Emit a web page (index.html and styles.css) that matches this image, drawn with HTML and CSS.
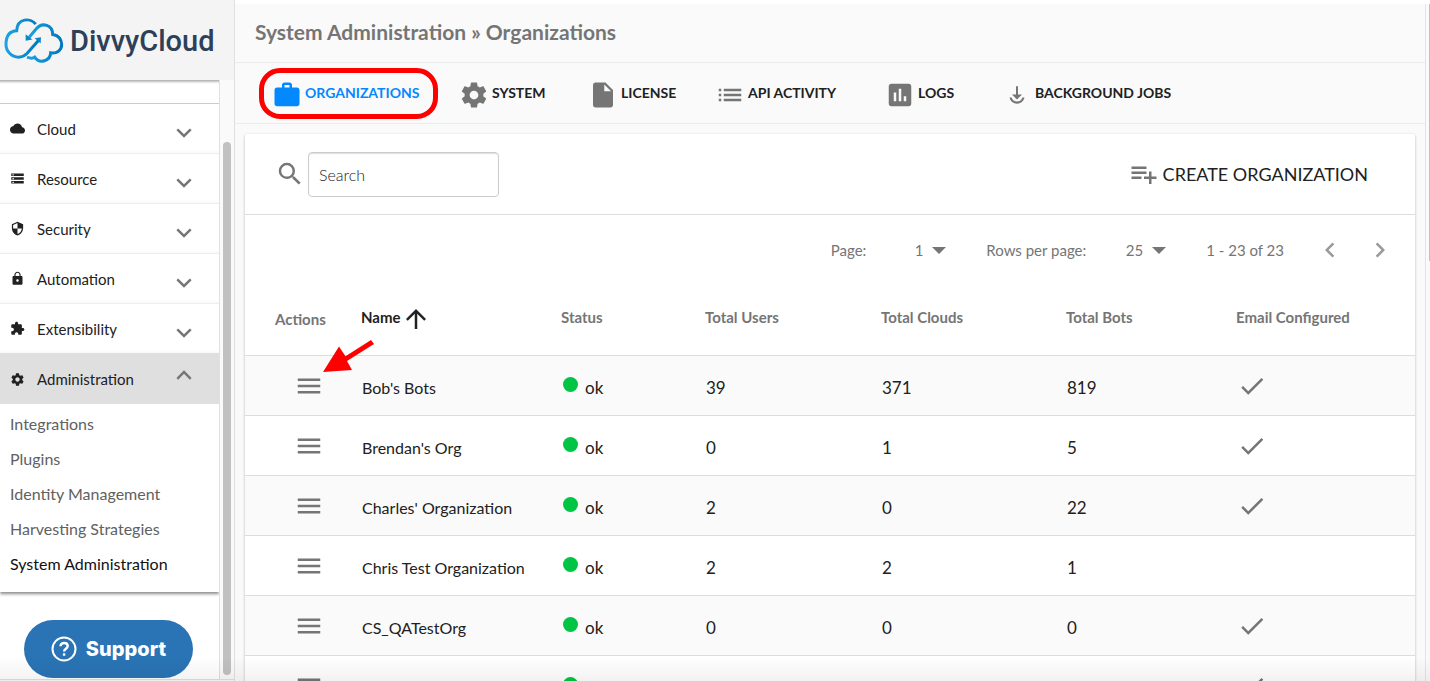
FILE: index.html
```html
<!DOCTYPE html>
<html lang="en">
<head>
<meta charset="utf-8">
<title>System Administration » Organizations</title>
<link rel="stylesheet" href="styles.css">
</head>
<body>
<svg class="defs" aria-hidden="true">
  <symbol id="i-down" viewBox="0 0 24 24"><path d="M7 7.200 12 12.200l5-5L18.500 8.700 12 15.200 5.500 8.700z"/></symbol>
  <symbol id="i-up" viewBox="0 0 24 24"><path d="M7 16 12 11l5 5L18.500 14.500 12 8l-6.500 6.500z"/></symbol>
  <symbol id="i-menu" viewBox="0 0 24 24"><path d="M3 18h18v-2H3v2zm0-5h18v-2H3v2zm0-7v2h18V6H3z"/></symbol>
  <symbol id="i-check" viewBox="0 0 24 24"><path d="M9 16.17 4.83 12l-1.42 1.41L9 19 21 7l-1.41-1.41z"/></symbol>
  <symbol id="i-gear" viewBox="0 0 24 24"><path d="M19.43 12.98c.04-.32.07-.64.07-.98s-.03-.66-.07-.98l2.11-1.65c.19-.15.24-.42.12-.64l-2-3.46c-.12-.22-.39-.3-.61-.22l-2.49 1c-.52-.4-1.08-.73-1.69-.98l-.38-2.65C14.46 2.18 14.25 2 14 2h-4c-.25 0-.46.18-.49.42l-.38 2.65c-.61.25-1.17.59-1.69.98l-2.49-1c-.23-.09-.49 0-.61.22l-2 3.46c-.13.22-.07.49.12.64l2.11 1.65c-.04.32-.07.65-.07.98s.03.66.07.98l-2.11 1.65c-.19.15-.24.42-.12.64l2 3.46c.12.22.39.3.61.22l2.49-1c.52.4 1.08.73 1.69.98l.38 2.65c.03.24.24.42.49.42h4c.25 0 .46-.18.49-.42l.38-2.65c.61-.25 1.17-.59 1.69-.98l2.49 1c.23.09.49 0 .61-.22l2-3.46c.12-.22.07-.49-.12-.64l-2.11-1.65zM12 15.5c-1.93 0-3.5-1.57-3.5-3.5s1.57-3.500 3.5-3.500 3.500 1.570 3.500 3.500-1.570 3.500-3.500 3.500z"/></symbol>
  <symbol id="i-caret" viewBox="0 0 14 8"><path d="M0 0h14L7 7z"/></symbol>
</svg>

<div class="app">
  <aside class="sidebar">
    <a class="brand" href="#">
      <svg class="brand-mark" viewBox="12 50 180 140" aria-hidden="true">
        <defs><linearGradient id="sky" x1="0" x2="1"><stop offset="0" stop-color="#1ba3e3"/><stop offset="1" stop-color="#0077bd"/></linearGradient></defs>
        <g fill="none" stroke="url(#sky)" stroke-width="9">
          <path d="M107 71C92 51 51 52 50 91C26 92 18 111 18 132C18 152 34 170 56 170C68 170 74 166 81 159L116 119"/>
          <path d="M85 113L107 87C127 62 158 74 158 102C176 104 185 118 185 132C185 149 170 161 152 157C151 180 119 193 104 170C98 175 89 173 81 170"/>
        </g>
        <path fill="#0a86cb" d="M123 110L122 129L104 113zM77 121L77 101L97 117z"/>
      </svg>
      <span class="brand-name">DivvyCloud</span>
    </a>
    <div class="side-body">
      <div class="side-col">
        <nav class="menu">
          <button class="menu-item"><svg class="mi" viewBox="0 0 24 24"><path d="M19.35 10.04C18.67 6.59 15.64 4 12 4 9.11 4 6.600 5.640 5.350 8.040 2.340 8.360 0 10.910 0 14c0 3.310 2.690 6 6 6h13c2.760 0 5-2.240 5-5 0-2.640-2.050-4.780-4.650-4.960z"/></svg><span>Cloud</span><svg class="chev"><use href="#i-down"/></svg></button>
          <button class="menu-item"><svg class="mi" viewBox="0 0 24 24"><path d="M2 20h20v-4H2v4zm2-3h2v2H4v-2zM2 4v4h20V4H2zm4 3H4V5h2v2zm-4 7h20v-4H2v4zm2-3h2v2H4v-2z"/></svg><span>Resource</span><svg class="chev"><use href="#i-down"/></svg></button>
          <button class="menu-item"><svg class="mi" viewBox="0 0 24 24"><path d="M12 1 3 5v6c0 5.55 3.84 10.740 9 12 5.160-1.260 9-6.450 9-12V5l-9-4zm0 10.990h7c-.53 4.120-3.280 7.790-7 8.940V12H5V6.300l7-3.110v8.800z"/></svg><span>Security</span><svg class="chev"><use href="#i-down"/></svg></button>
          <button class="menu-item"><svg class="mi" viewBox="0 0 24 24"><path d="M18 8h-1V6c0-2.760-2.240-5-5-5S7 3.240 7 6v2H6c-1.100 0-2 .9-2 2v10c0 1.100.9 2 2 2h12c1.100 0 2-.9 2-2V10c0-1.100-.9-2-2-2zm-6 9c-1.100 0-2-.9-2-2s.9-2 2-2 2 .9 2 2-.9 2-2 2zm3.100-9H8.900V6c0-1.710 1.390-3.100 3.100-3.100s3.100 1.390 3.100 3.100v2z"/></svg><span>Automation</span><svg class="chev"><use href="#i-down"/></svg></button>
          <button class="menu-item"><svg class="mi" viewBox="0 0 24 24"><path d="M20.500 11H19V7c0-1.100-.9-2-2-2h-4V3.500C13 2.120 11.880 1 10.500 1S8 2.120 8 3.500V5H4c-1.100 0-1.990.9-1.990 2v3.800H3.500c1.490 0 2.700 1.210 2.700 2.700s-1.210 2.700-2.700 2.700H2V20c0 1.100.9 2 2 2h3.800v-1.500c0-1.490 1.210-2.700 2.700-2.700 1.490 0 2.700 1.210 2.700 2.700V22H17c1.100 0 2-.9 2-2v-4h1.500c1.380 0 2.500-1.120 2.500-2.500S21.880 11 20.500 11z"/></svg><span>Extensibility</span><svg class="chev"><use href="#i-down"/></svg></button>
          <button class="menu-item open" aria-expanded="true"><svg class="mi"><use href="#i-gear"/></svg><span>Administration</span><svg class="chev"><use href="#i-up"/></svg></button>
          <ul class="submenu">
            <li><a href="#">Integrations</a></li>
            <li><a href="#">Plugins</a></li>
            <li><a href="#">Identity Management</a></li>
            <li><a href="#">Harvesting Strategies</a></li>
            <li><a href="#" class="current">System Administration</a></li>
          </ul>
        </nav>
        <button class="support">
          <svg viewBox="0 0 26 26" fill="none" stroke="#fff" stroke-width="2" aria-hidden="true"><circle cx="13" cy="13" r="11.500"/><path stroke-width="2.400" d="M9.500 10.300c0-4.600 7.200-4.300 7.200-.2 0 2.700-3.600 2.700-3.600 5.300M13.100 17.200v2.500"/></svg>
          <span>Support</span>
        </button>
      </div>
      <div class="side-scroll"><div class="side-thumb"></div></div>
    </div>
  </aside>

  <div class="page">
    <main class="main">
      <h1 class="title">System Administration » Organizations</h1>
      <nav class="tabs">
        <a class="tab active" href="#"><svg viewBox="0 0 24 24"><path d="M20 6h-4V4c0-1.110-.89-2-2-2h-4c-1.110 0-2 .89-2 2v2H4c-1.110 0-1.990.89-1.990 2L2 19c0 1.110.89 2 2 2h16c1.110 0 2-.89 2-2V8c0-1.110-.89-2-2-2zm-6 0h-4V4h4v2z"/></svg><span>ORGANIZATIONS</span><i class="ring"></i></a>
        <a class="tab" href="#"><svg><use href="#i-gear"/></svg><span>SYSTEM</span></a>
        <a class="tab" href="#"><svg viewBox="0 0 24 24"><path d="M6 2c-1.100 0-1.990.9-1.990 2L4 20c0 1.100.89 2 1.990 2H18c1.100 0 2-.9 2-2V8l-6-6H6zm7 7V3.500L18.500 9H13z"/></svg><span>LICENSE</span></a>
        <a class="tab" href="#"><svg viewBox="0 0 24 24"><path d="M3 7h2v2H3zM3 11h2v2H3zM3 15h2v2H3zM7 7h14v2H7zM7 11h14v2H7zM7 15h14v2H7z"/></svg><span>API ACTIVITY</span></a>
        <a class="tab" href="#"><svg viewBox="0 0 24 24"><path d="M19 3H5c-1.100 0-2 .9-2 2v14c0 1.100.9 2 2 2h14c1.100 0 2-.9 2-2V5c0-1.100-.9-2-2-2zM9 17H7v-7h2v7zm4 0h-2V7h2v10zm4 0h-2v-4h2v4z"/></svg><span>LOGS</span></a>
        <a class="tab" href="#"><svg viewBox="0 0 24 24"><path d="M11.200 5h1.600v6.500H16l-4 4-4-4h3.200zM6 14h1.700a4.500 4.500 0 0 0 8.600 0H18a6.100 6.100 0 0 1-12 0z"/></svg><span>BACKGROUND JOBS</span></a>
      </nav>

      <section class="card">
        <div class="toolbar">
          <label class="search"><svg viewBox="0 0 24 24" role="img" aria-label="Search organizations"><path d="M15.500 14h-.79l-.28-.27A6.471 6.471 0 0 0 16 9.500 6.500 6.500 0 1 0 9.500 16c1.610 0 3.090-.59 4.230-1.570l.27.28v.79l5 4.990L20.490 19l-4.990-5zm-6 0C7.010 14 5 11.990 5 9.500S7.010 5 9.500 5 14 7.010 14 9.500 11.990 14 9.500 14z"/></svg>
            <input type="text" placeholder="Search"></label>
          <button class="create"><svg viewBox="0 0 24 24"><path d="M14 10H2v2h12v-2zm0-4H2v2h12V6zm4 8v-4h-2v4h-4v2h4v4h2v-4h4v-2h-4zM2 16h8v-2H2v2z"/></svg><span>CREATE ORGANIZATION</span></button>
        </div>
        <div class="pager">
          <label for="page">Page:</label>
          <span class="pick"><select id="page"><option>1</option></select><svg><use href="#i-caret"/></svg></span>
          <label for="rows">Rows per page:</label>
          <span class="pick"><select id="rows"><option>25</option></select><svg><use href="#i-caret"/></svg></span>
          <span class="range">1 - 23 of 23</span>
          <button class="step" aria-label="Previous page"><svg viewBox="0 0 24 24"><path d="M15.410 7.410 14 6l-6 6 6 6 1.410-1.410L10.830 12z"/></svg></button>
          <button class="step" aria-label="Next page"><svg viewBox="0 0 24 24"><path d="M10 6 8.590 7.410 13.170 12l-4.580 4.590L10 18l6-6z"/></svg></button>
        </div>
        <table class="orgs">
          <colgroup><col class="c-act"><col class="c-name"><col class="c-status"><col class="c-users"><col class="c-clouds"><col class="c-bots"><col class="c-mail"></colgroup>
          <thead>
            <tr><th class="actions">Actions<svg class="pointer" viewBox="0 0 50 32" aria-hidden="true"><path d="M48 0 22.500 16.300 16 6.500 0 32 29 30 24 21 51 4z"/></svg></th><th class="sorted"><span>Name</span><svg viewBox="0 0 24 24"><path d="M4 12l1.410 1.410L11 7.830V20h2V7.830l5.580 5.590L20 12l-8-8-8 8z"/></svg></th><th>Status</th><th>Total Users</th><th>Total Clouds</th><th>Total Bots</th><th>Email Configured</th></tr>
          </thead>
          <tbody>
            <tr><td><button aria-label="Actions"><svg><use href="#i-menu"/></svg></button></td><td class="name">Bob's Bots</td><td><i class="dot"></i>ok</td><td>39</td><td>371</td><td>819</td><td class="mail"><svg><use href="#i-check"/></svg></td></tr>
            <tr><td><button aria-label="Actions"><svg><use href="#i-menu"/></svg></button></td><td class="name">Brendan's Org</td><td><i class="dot"></i>ok</td><td>0</td><td>1</td><td>5</td><td class="mail"><svg><use href="#i-check"/></svg></td></tr>
            <tr><td><button aria-label="Actions"><svg><use href="#i-menu"/></svg></button></td><td class="name">Charles' Organization</td><td><i class="dot"></i>ok</td><td>2</td><td>0</td><td>22</td><td class="mail"><svg><use href="#i-check"/></svg></td></tr>
            <tr><td><button aria-label="Actions"><svg><use href="#i-menu"/></svg></button></td><td class="name">Chris Test Organization</td><td><i class="dot"></i>ok</td><td>2</td><td>2</td><td>1</td><td class="mail"></td></tr>
            <tr><td><button aria-label="Actions"><svg><use href="#i-menu"/></svg></button></td><td class="name">CS_QATestOrg</td><td><i class="dot"></i>ok</td><td>0</td><td>0</td><td>0</td><td class="mail"><svg><use href="#i-check"/></svg></td></tr>
            <tr><td><button aria-label="Actions"><svg><use href="#i-menu"/></svg></button></td><td class="name"></td><td><i class="dot"></i></td><td></td><td></td><td></td><td class="mail"><svg><use href="#i-check"/></svg></td></tr>
          </tbody>
        </table>
      </section>
    </main>
    <div class="page-scroll"><div class="page-thumb"></div></div>
  </div>
</div>
<div class="fade"></div>
</body>
</html>
```
FILE: styles.css
```css
* { box-sizing: border-box; }
body { margin: 0; font-family: Lato, sans-serif; color: #212121; background: #fff; }
button { border: 0; padding: 0; background: none; font: inherit; color: inherit; cursor: pointer; }
a { color: inherit; text-decoration: none; }
svg { flex: none; fill: #757575; }
.defs { position: absolute; width: 0; height: 0; }
.app { display: flex; height: 100vh; overflow: hidden; }

/* Sidebar */
.sidebar { display: flex; flex-direction: column; flex: none; width: 235px; border-right: 1px solid #e0e0e0; background: #fafafa; }
.brand { display: flex; align-items: center; gap: 6px; flex: none; height: 80px; padding-left: 4px; background: #f4f4f4; }
.brand-mark { width: 60px; height: 47px; fill: none; }
.brand-name { padding-top: 2px; font: 500 29px/40px Roboto, sans-serif; color: #2e4057; }
.side-body { display: flex; flex: 1; min-height: 0; margin-bottom: 1px; border-bottom: 1px solid #e0e0e0; }
.side-col { width: 220px; border-right: 1px solid #e0e0e0; background: linear-gradient(#b8b8b8, #b8b8b8 1px, #e4e4e4 2px, #fff 4px); }
.menu { padding-top: 23px; box-shadow: 0 2px 3px #8a8a8a; clip-path: inset(0 0 -6px 0); }
.menu-item { display: flex; align-items: center; width: 100%; height: 50px; padding: 0 21px 0 10px; border-top: 1px solid #eee; font-size: 15px; text-align: left; background: linear-gradient(#fff, #fff 46px, #f8f8f8 49px); }
.menu-item:first-child { border-top-color: #ccc; }
.menu-item span { flex: 1; margin-left: 12px; }
.mi { width: 15px; height: 15px; fill: #212121; }
.chev { width: 28px; height: 28px; margin-top: 10px; }
.menu .open { height: 51px; border-top-color: #dfdfdf; background: #dfdfdf; }
.open .chev { margin-top: 0; margin-bottom: 8px; }
.submenu { margin: 0; padding: 2px 0 11px; list-style: none; }
.submenu a { display: block; padding-left: 10px; font-size: 16px; line-height: 35px; color: #616161; }
.submenu .current { color: #111; }
.support { display: flex; align-items: center; justify-content: center; gap: 9px; width: 169px; height: 58px; margin: 28px 0 0 24px; border-radius: 29px; background: #2a74b5; color: #fff; font: 800 20px/24px Inter, sans-serif; }
.support svg { width: 26px; height: 26px; fill: none; }
.side-scroll { flex: 1; padding: 62px 3px 4px; }
.side-thumb { width: 8px; height: 100%; border-radius: 4px; background: #c1c1c1; }

/* Page */
.page { display: flex; flex: 1; min-width: 0; border-top: 4px solid #fff; background: #fafafa; }
.main { flex: 1; min-width: 0; }
.title { margin: 0; height: 59px; padding-left: 20px; border-bottom: 1px solid #ececec; font-size: 21px; line-height: 56px; font-weight: 700; color: #757575; }
.tabs { display: grid; grid-template-columns: 187px 129px 127px 170px 117px auto; height: 61px; padding-left: 37px; border-bottom: 1px solid #ececec; }
.tab { position: relative; display: flex; align-items: center; gap: 3px; font-size: 14px; font-weight: 700; }
.tab span { padding-bottom: 2px; }
.tab svg { width: 30px; height: 30px; margin-top: 4px; }
.active { color: #0288ff; }
.active svg { fill: #0288ff; }
.ring { position: absolute; left: -13px; top: 5px; width: 179px; height: 51px; border: 5px solid #f00; border-radius: 21px; }
.card { margin: 10px 10px 0; background: #fff; border-radius: 2px; box-shadow: 0 1px 3px #0004; }
.toolbar { display: flex; align-items: center; justify-content: space-between; height: 81px; padding: 0 47px 0 30px; border-bottom: 1px solid #ddd; }
.search { display: flex; align-items: center; gap: 3px; }
.search svg, .create svg { width: 30px; height: 30px; }
.search input { width: 191px; height: 45px; padding: 0 10px; border: 1px solid #ccc; border-radius: 4px; background: #fff; font: 300 16px/20px Lato, sans-serif; box-shadow: inset 0 1px 1px #0002; }
.search input::placeholder { color: #222; }
.create { display: flex; align-items: center; gap: 4px; font-size: 18px; }
.pager { display: flex; align-items: center; justify-content: flex-end; height: 70px; padding-right: 20px; font-size: 15px; color: #757575; }
.pick { position: relative; width: 80px; margin-right: 40px; }
.pick select { appearance: none; width: 100%; padding: 0 23px 0 0; border: 0; background: none; font: inherit; color: inherit; text-align-last: right; }
.pick svg { position: absolute; right: 0; top: 6px; width: 14px; height: 8px; pointer-events: none; }
.range { margin-right: 31px; }
.step { width: 30px; height: 30px; }
.step + .step { margin-left: 20px; }
.step svg { display: block; width: 30px; height: 30px; fill: #999; }

/* Table */
.orgs { width: 100%; table-layout: fixed; border-collapse: separate; border-spacing: 0; }
.c-act { width: 116px; }
.c-name { width: 200px; }
.c-status { width: 144px; }
.c-users { width: 176px; }
.c-clouds { width: 185px; }
.c-bots { width: 170px; }
.c-mail { width: 179px; }
.orgs th { height: 71px; padding: 0 0 6px; border-bottom: 1px solid #ddd; font-size: 15px; font-weight: 700; text-align: left; color: #757575; }
.orgs .actions { position: relative; padding: 0 0 2px 30px; }
.orgs .sorted { padding-bottom: 4px; color: #212121; }
.sorted svg { width: 30px; height: 30px; margin: -6px 0; vertical-align: middle; fill: #212121; }
.pointer { position: absolute; left: 78px; top: 55px; width: 50px; height: 32px; fill: #f00; z-index: 1; overflow: visible; }
.orgs td { height: 60px; padding: 3px 0 0 1px; border-bottom: 1px solid #ddd; font-size: 17px; }
.orgs td:first-child { padding: 0 0 0 49px; }
.orgs .name { font-size: 16px; }
.orgs .mail { padding-top: 0; }
.orgs td svg, .orgs td button { display: block; width: 30px; height: 30px; }
.orgs tbody tr:nth-child(odd) { background: #fafafa; }
.dot { display: inline-block; width: 15px; height: 15px; margin: 0 7px 2px 1px; border-radius: 50%; background: #00c544; }
.page-scroll { flex: none; width: 5px; border-left: 1px solid #e4e4e4; }
.page-thumb { width: 1px; height: 257px; margin-left: auto; background: #c1c1c1; }
.fade { position: fixed; left: 0; right: 0; bottom: 0; height: 24px; background: linear-gradient(#0000, #0000000d); pointer-events: none; }
```
